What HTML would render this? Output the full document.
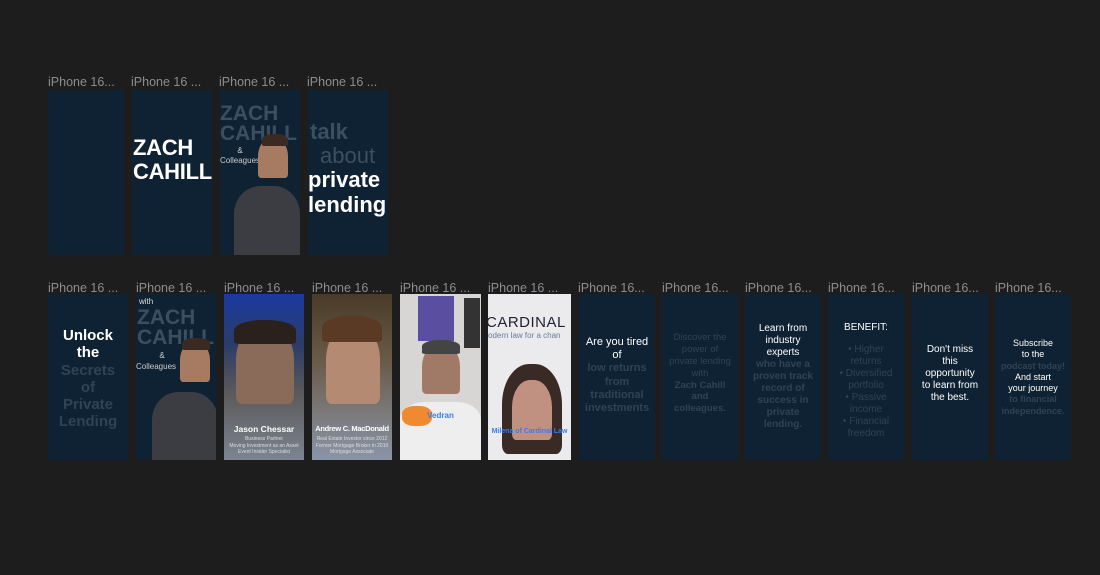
<!DOCTYPE html>
<html><head><style>
*{margin:0;padding:0;box-sizing:border-box}
body{width:1100px;height:575px;background:#1e1d1e;font-family:"Liberation Sans",sans-serif;position:relative;overflow:hidden}
.l{position:absolute;color:#8d8d8f;font-size:12.5px;white-space:nowrap}
.f{position:absolute;background:#0f2233;overflow:hidden;color:#fff;text-align:center}
.t{position:absolute;left:0;right:0;text-align:center;line-height:1.15}
.dim{color:#2e4354}
.b{font-weight:bold}
.person{position:absolute;border-radius:45% 45% 10% 10%}
</style></head><body>
<div class="l" style="left:48px;top:75px">iPhone 16...</div>
<div class="l" style="left:131px;top:75px">iPhone 16 ...</div>
<div class="l" style="left:219px;top:75px">iPhone 16 ...</div>
<div class="l" style="left:307px;top:75px">iPhone 16 ...</div>

<div class="f" style="left:48px;top:90px;width:76px;height:165px"></div>
<div class="f" style="left:132px;top:90px;width:80px;height:165px">
<div class="t b" style="top:46px;font-size:22px;line-height:1.1;text-align:left;left:1px;letter-spacing:-0.3px">ZACH<br>CAHILL</div></div>
<div class="f" style="left:220px;top:90px;width:80px;height:165px">
<div class="t b dim" style="top:14px;font-size:21px;line-height:0.95;text-align:left;left:0;color:#3a4f60">ZACH<br>CAHILL</div>
<div class="t" style="top:56px;font-size:8px;left:-40px;color:#ccc">&amp;</div>
<div class="t" style="top:66px;font-size:8px;text-align:left;left:0;color:#ccc">Colleagues</div>
<div class="person" style="left:38px;top:48px;width:30px;height:40px;background:#a77a62"></div>
<div class="person" style="left:42px;top:44px;width:26px;height:12px;background:#3a2a22"></div>
<div style="position:absolute;left:14px;top:96px;width:66px;height:70px;background:#3b3d42;border-radius:40% 40% 0 0"></div>
</div>
<div class="f" style="left:308px;top:90px;width:80px;height:165px">
<div class="t b" style="top:29px;font-size:22px;left:2px;text-align:left;color:#3a4f60">talk</div>
<div class="t" style="top:53px;font-size:22px;left:12px;text-align:left;color:#3a4f60">about</div>
<div class="t b" style="top:77px;font-size:22px;line-height:1.15;text-align:left;left:0">private<br>lending</div></div>

<div class="l" style="left:48px;top:281px">iPhone 16 ...</div>
<div class="l" style="left:136px;top:281px">iPhone 16 ...</div>
<div class="l" style="left:224px;top:281px">iPhone 16 ...</div>
<div class="l" style="left:312px;top:281px">iPhone 16 ...</div>
<div class="l" style="left:400px;top:281px">iPhone 16 ...</div>
<div class="l" style="left:488px;top:281px">iPhone 16 ...</div>
<div class="l" style="left:578px;top:281px">iPhone 16...</div>
<div class="l" style="left:662px;top:281px">iPhone 16...</div>
<div class="l" style="left:745px;top:281px">iPhone 16...</div>
<div class="l" style="left:828px;top:281px">iPhone 16...</div>
<div class="l" style="left:912px;top:281px">iPhone 16...</div>
<div class="l" style="left:995px;top:281px">iPhone 16...</div>

<div class="f" style="left:48px;top:294px;width:80px;height:166px">
<div class="t b" style="top:33px;font-size:15px;line-height:1.15">Unlock<br>the<br><span style="color:#2e4354">Secrets<br>of<br>Private<br>Lending</span></div></div>
<div class="f" style="left:136px;top:294px;width:80px;height:166px">
<div class="t" style="top:3px;font-size:8px;text-align:left;left:3px;color:#ddd">with</div>
<div class="t b" style="top:14px;font-size:21px;line-height:0.95;text-align:left;left:1px;color:#3a4f60">ZACH<br>CAHILL</div>
<div class="t" style="top:57px;font-size:8px;left:-28px;color:#ccc">&amp;</div>
<div class="t" style="top:68px;font-size:8px;text-align:left;left:0;color:#ccc">Colleagues</div>
<div class="person" style="left:44px;top:48px;width:30px;height:40px;background:#a77a62"></div>
<div class="person" style="left:46px;top:44px;width:28px;height:12px;background:#3a2a22"></div>
<div style="position:absolute;left:16px;top:98px;width:66px;height:70px;background:#3b3d42;border-radius:40% 40% 0 0"></div>
</div>
<div class="f" style="left:224px;top:294px;width:80px;height:166px;background:linear-gradient(#1a3aa0 0,#2b3c6a 30%,#5c5a5a 60%,#7b8592 100%)">
<div class="person" style="left:12px;top:30px;width:58px;height:80px;background:#8a6a58"></div>
<div class="person" style="left:10px;top:26px;width:62px;height:24px;background:#2a201c"></div>
<div class="t b" style="top:131px;font-size:8.5px">Jason Chessar</div>
<div class="t" style="top:142px;font-size:5px;color:#ddd;line-height:1.3">Business Partner<br>Moving Investment as an Asset<br>Event Insider Specialist</div></div>
<div class="f" style="left:312px;top:294px;width:80px;height:166px;background:linear-gradient(#4a3a28,#6a5a48 40%,#8a95a8 100%)">
<div class="person" style="left:14px;top:30px;width:54px;height:80px;background:#b48a72"></div>
<div class="person" style="left:10px;top:22px;width:60px;height:26px;background:#5a3a24"></div>
<div class="t b" style="top:131px;font-size:7.5px;white-space:nowrap;letter-spacing:-0.3px">Andrew C. MacDonald</div>
<div class="t" style="top:142px;font-size:5px;color:#ddd;line-height:1.3">Real Estate Investor since 2012<br>Former Mortgage Broker in 2010<br>Mortgage Associate</div></div>
<div class="f" style="left:400px;top:294px;width:81px;height:166px;background:#d8d6d4">
<div style="position:absolute;left:18px;top:2px;width:36px;height:45px;background:#5a4ea0"></div>
<div style="position:absolute;left:64px;top:4px;width:16px;height:50px;background:#333"></div>
<div class="person" style="left:22px;top:50px;width:38px;height:50px;background:#a07a66"></div>
<div class="person" style="left:22px;top:46px;width:38px;height:14px;background:#444"></div>
<div style="position:absolute;left:0;top:108px;width:81px;height:60px;background:#eee;border-radius:30% 30% 0 0"></div>
<div style="position:absolute;left:2px;top:112px;width:30px;height:20px;background:#f08a30;border-radius:40%"></div>
<div class="t b" style="top:117px;font-size:8px;color:#3a7cf0">Vedran</div></div>
<div class="f" style="left:488px;top:294px;width:83px;height:166px;background:#ebebed">
<div class="t" style="top:20px;font-size:15px;color:#223;text-align:left;left:-2px;letter-spacing:0.5px">CARDINAL</div>
<div class="t" style="top:37px;font-size:8px;color:#6a7a9a;text-align:left;left:0">odern law for a chan</div>
<div class="person" style="left:14px;top:70px;width:60px;height:90px;background:#3a2a26"></div>
<div class="person" style="left:24px;top:86px;width:40px;height:60px;background:#c09080"></div>
<div class="t b" style="top:134px;font-size:7px;color:#3a7cf0">Milena of Cardinal Law</div></div>

<div class="f" style="left:579px;top:294px;width:76px;height:166px">
<div class="t" style="top:42px;font-size:11px;line-height:1.2">Are you tired<br>of<br><span class="b dim">low returns<br>from<br>traditional<br>investments</span></div></div>
<div class="f" style="left:662px;top:294px;width:76px;height:166px">
<div class="t dim" style="top:38px;font-size:9.5px;line-height:1.25">Discover the<br>power of<br>private lending<br>with<br><b>Zach Cahill<br>and<br>colleagues.</b></div></div>
<div class="f" style="left:745px;top:294px;width:76px;height:166px">
<div class="t" style="top:29px;font-size:10px;line-height:1.2">Learn from<br>industry<br>experts<br><span class="b dim">who have a<br>proven track<br>record of<br>success in<br>private<br>lending.</span></div></div>
<div class="f" style="left:828px;top:294px;width:76px;height:166px">
<div class="t" style="top:28px;font-size:10px">BENEFIT:</div>
<div class="t dim" style="top:50px;font-size:10px;line-height:1.2">• Higher<br>returns<br>• Diversified<br>portfolio<br>• Passive<br>income<br>• Financial<br>freedom</div></div>
<div class="f" style="left:912px;top:294px;width:76px;height:166px">
<div class="t" style="top:50px;font-size:10px;line-height:1.2">Don't miss<br>this<br>opportunity<br>to learn from<br>the best.</div></div>
<div class="f" style="left:995px;top:294px;width:76px;height:166px">
<div class="t" style="top:44px;font-size:9px;line-height:1.25">Subscribe<br>to the<br><span class="b dim">podcast today!</span><br>And start<br>your journey<br><span class="b dim">to financial<br>independence.</span></div></div>
</body></html>
